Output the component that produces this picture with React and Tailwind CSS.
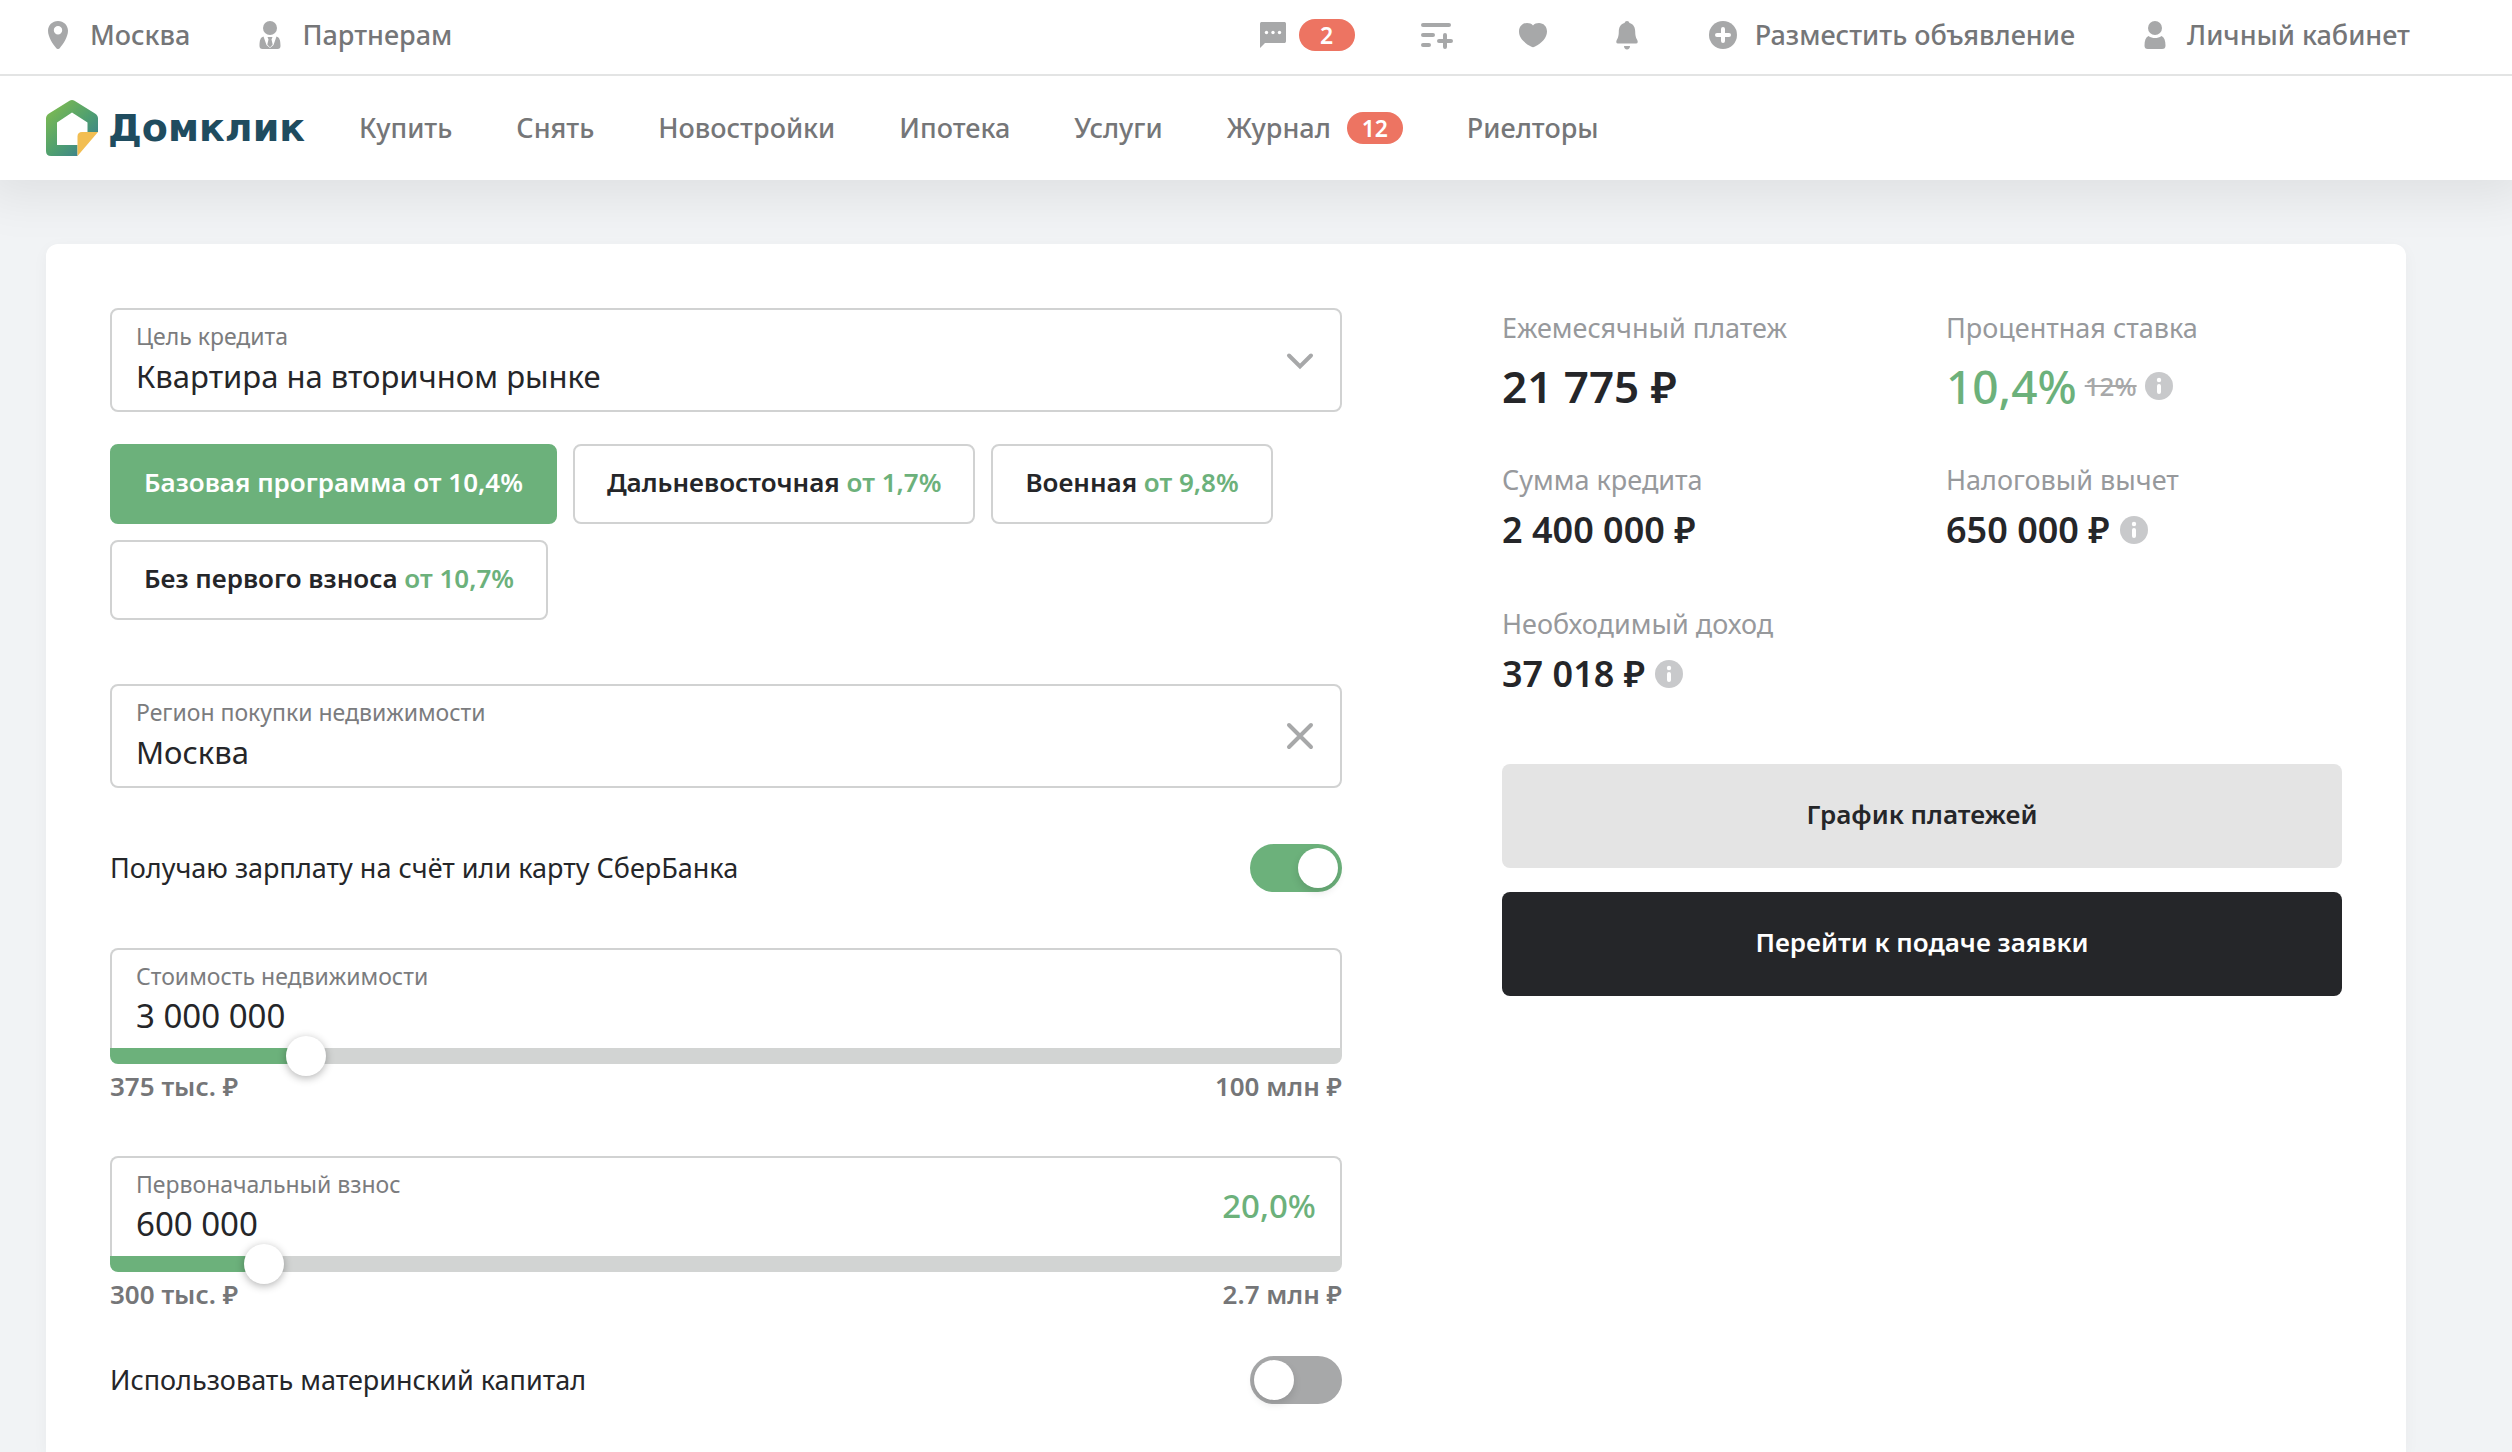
import { useState } from "react";

const programs = [
  { name: "Базовая программа", rate: "от 10,4%" },
  { name: "Дальневосточная", rate: "от 1,7%" },
  { name: "Военная", rate: "от 9,8%" },
  { name: "Без первого взноса", rate: "от 10,7%" },
];

function PinIcon() {
  return (
    <svg className="w-7 h-7" viewBox="0 0 28 28" fill="currentColor">
      <path
        fillRule="evenodd"
        d="M14 0C8.3 0 4 4.300 4 9.800 4 16 9 23.500 12.300 27.200c1 1.100 2.400 1.100 3.400 0C19 23.500 24 16 24 9.800 24 4.300 19.700 0 14 0Zm0 5a4.200 4.200 0 1 1 0 8.400A4.200 4.200 0 0 1 14 5Z"
      />
    </svg>
  );
}

function PartnerIcon() {
  return (
    <svg className="w-7 h-7" viewBox="0 0 28 28" fill="currentColor">
      <circle cx="14" cy="7" r="7" />
      <path d="M7.500 15.500C4.500 16.500 3.500 19 3.500 25c0 2 1 3 3 3h15c2 0 3-1 3-3 0-6-1-8.500-4-9.500L17.500 24 14 27l-3.500-3Z" />
      <path d="M11.500 16h5l-1 2.500 1.200 5L14 26.500l-2.700-3 1.200-5Z" />
    </svg>
  );
}

function PersonIcon() {
  return (
    <svg className="w-7 h-7" viewBox="0 0 28 28" fill="currentColor">
      <circle cx="14" cy="7" r="7" />
      <path d="M7.500 15c4 2.700 9 2.700 13 0 2.700 1.300 4 4.500 4 9.500 0 2.500-1 3.500-3.500 3.500H7c-2.500 0-3.500-1-3.500-3.500 0-5 1.300-8.200 4-9.500Z" />
    </svg>
  );
}

function ChatIcon() {
  return (
    <svg className="w-7 h-7" viewBox="0 0 28 28">
      <path d="M3 1h22c1.400 0 2 .6 2 2v17c0 1.400-.6 2-2 2H6l-5 5V3c0-1.400.6-2 2-2Z" fill="currentColor" />
      <g fill="white">
        <circle cx="7.500" cy="11.500" r="1.700" />
        <circle cx="14" cy="11.500" r="1.700" />
        <circle cx="20.500" cy="11.500" r="1.700" />
      </g>
    </svg>
  );
}

function CompareIcon() {
  return (
    <svg
      className="w-8 h-7"
      viewBox="0 0 32 28"
      fill="none"
      stroke="currentColor"
      strokeWidth="4"
      strokeLinecap="round"
    >
      <path d="M2 4h26M2 14h10M2 24h6M18 20h12M24 14v12" />
    </svg>
  );
}

function HeartIcon() {
  return (
    <svg className="w-7 h-7" viewBox="0 0 28 28" fill="currentColor">
      <path d="M14 4.500C12.500 2.700 10.500 2 8 2 3.500 2 0 5.500 0 10.500 0 17 5.500 22 12 25.600c1.400.8 2.600.8 4 0C22.500 22 28 17 28 10.500 28 5.500 24.500 2 20 2c-2.500 0-4.500.7-6 2.500Z" />
    </svg>
  );
}

function BellIcon() {
  return (
    <svg className="w-7 h-7 overflow-visible" viewBox="0 0 28 28" fill="currentColor">
      <path d="M14 0c-1.500 0-2 .8-2.500 2C7.500 3 5.800 6.500 5.800 10.500c0 3.500-.5 6-1.800 8-1.200 1.900-1 4 1 4h18c2 0 2.200-2.100 1-4-1.300-2-1.800-4.500-1.800-8 0-4-1.700-7.500-5.700-8.500-.5-1.200-1-2-2.500-2ZM11 25h6c0 2-1.300 3.500-3 3.500S11 27 11 25Z" />
    </svg>
  );
}

function PlusIcon() {
  return (
    <svg className="w-7 h-7" viewBox="0 0 28 28">
      <circle cx="14" cy="14" r="14" fill="currentColor" />
      <path d="M14 8v12M8 14h12" stroke="white" strokeWidth="4" strokeLinecap="round" />
    </svg>
  );
}

function Logo() {
  return (
    <a href="#" className="flex items-center text-[#1f4c5f]">
      <svg className="w-[52px] h-14" viewBox="0 0 52 56">
        <defs>
          <linearGradient id="house" x1="0" y1="10" x2="44" y2="54" gradientUnits="userSpaceOnUse">
            <stop offset="0" stopColor="#7dba51" />
            <stop offset="0.55" stopColor="#4f9f70" />
            <stop offset="0.8" stopColor="#438c82" />
            <stop offset="1" stopColor="#3470a5" />
          </linearGradient>
        </defs>
        <path
          fill="url(#house)"
          fillRule="evenodd"
          d="M23.500.8c1.500-1 3.500-1 5 0L49 13.500c2 1.200 3 3 3 5V32H41.500V22.500L26 12.500 11 22.500V45h20.500v11H5c-3.300 0-5-1.700-5-5V18.500c0-2 1-3.800 3-5Z"
        />
        <path fill="#f2be52" d="M52 32H36c-3 0-4.500 1.500-4.500 4.500V56Z" />
      </svg>
      <span className="ml-2.5 font-['DejaVu_Sans',sans-serif] font-bold text-[38px] leading-10">Домклик</span>
    </a>
  );
}

function Badge({ children }) {
  return (
    <span className="h-8 min-w-14 rounded-full bg-[#ed7462] text-white text-[23px] leading-8 font-semibold text-center">
      {children}
    </span>
  );
}

function InfoButton() {
  return (
    <button type="button" aria-label="Подробнее" className="text-[#c8c9cb]">
      <svg className="w-7 h-7" viewBox="0 0 28 28">
        <circle cx="14" cy="14" r="14" fill="currentColor" />
        <circle cx="14" cy="8" r="2.200" fill="white" />
        <rect x="12" y="12" width="4" height="10" rx="2" fill="white" />
      </svg>
    </button>
  );
}

function TopLink({ icon, children }) {
  return (
    <a href="#" className="flex items-center gap-[18px]">
      <span className="text-[#a7a8a9]">{icon}</span>
      {children}
    </a>
  );
}

function Header() {
  return (
    <header className="bg-white shadow-[0_0_48px_16px_rgba(0,0,0,0.08)] text-[27px] font-medium text-[#757678]">
      <div className="h-[76px] pb-1 border-b-2 border-[#e3e4e4] pl-11 pr-[102px] flex items-center justify-between">
        <div className="flex items-center gap-[66px]">
          <TopLink icon={<PinIcon />}>Москва</TopLink>
          <TopLink icon={<PartnerIcon />}>Партнерам</TopLink>
        </div>
        <div className="flex items-center gap-[66px]">
          <a href="#" aria-label="Сообщения" className="flex items-center gap-3 text-[#a7a8a9]">
            <ChatIcon />
            <Badge>2</Badge>
          </a>
          <a href="#" aria-label="Сравнение" className="text-[#a7a8a9]"><CompareIcon /></a>
          <a href="#" aria-label="Избранное" className="text-[#a7a8a9]"><HeartIcon /></a>
          <a href="#" aria-label="Уведомления" className="mr-0.5 text-[#a7a8a9]"><BellIcon /></a>
          <TopLink icon={<PlusIcon />}>Разместить объявление</TopLink>
          <TopLink icon={<PersonIcon />}>Личный кабинет</TopLink>
        </div>
      </div>
      <div className="h-[104px] pl-[46px] flex items-center">
        <Logo />
        <nav className="ml-[54px] flex items-center gap-16">
          <a href="#">Купить</a>
          <a href="#">Снять</a>
          <a href="#">Новостройки</a>
          <a href="#">Ипотека</a>
          <a href="#">Услуги</a>
          <a href="#" className="flex items-center gap-4">
            Журнал <Badge>12</Badge>
          </a>
          <a href="#">Риелторы</a>
        </nav>
      </div>
    </header>
  );
}

function Toggle({ id, label, checked, onChange }) {
  return (
    <div className="flex items-center justify-between h-12">
      <label htmlFor={id} className="text-[27px] leading-8">{label}</label>
      <input
        id={id}
        type="checkbox"
        role="switch"
        checked={checked}
        onChange={(e) => onChange(e.target.checked)}
        className="appearance-none w-[92px] h-12 p-1 rounded-full bg-[#a7a8a9] checked:bg-[#6cb17b] flex checked:justify-end before:w-10 before:h-10 before:rounded-full before:bg-white before:shadow-[0_4px_8px_rgba(0,0,0,0.12)]"
      />
    </div>
  );
}

function SliderField({ id, label, value, percent, position, min, max }) {
  const [pos, setPos] = useState(position);

  return (
    <div>
      <div className="h-[100px] border-2 border-b-0 border-[#d1d2d2] rounded-t-lg px-6 pt-3 flex items-start justify-between">
        <div className="flex-1">
          <label htmlFor={id} className="block text-[23px] leading-7 text-[#7b7c7e]">{label}</label>
          <input id={id} defaultValue={value} className="mt-1.5 block w-full h-10 text-[33px] outline-none" />
        </div>
        {percent && (
          <span className="mt-4 text-[33px] leading-10 font-medium text-[#6cb17b]">{percent}</span>
        )}
      </div>
      <input
        type="range"
        aria-label={label}
        min="0"
        max="1000"
        value={pos}
        onChange={(e) => setPos(Number(e.target.value))}
        style={{
          backgroundImage: `linear-gradient(to right, #6cb17b ${pos / 10 + 1}%, #d2d4d3 ${pos / 10 + 1}%)`,
        }}
        className="block appearance-none w-full h-4 rounded-b-lg [&::-webkit-slider-thumb]:appearance-none [&::-webkit-slider-thumb]:w-10 [&::-webkit-slider-thumb]:h-10 [&::-webkit-slider-thumb]:rounded-full [&::-webkit-slider-thumb]:bg-white [&::-webkit-slider-thumb]:shadow-[0_2px_8px_rgba(0,0,0,0.3)]"
      />
      <div className="pt-1.5 pb-0.5 flex justify-between text-[26px] leading-8 font-semibold text-[#757678]">
        <span>{min}</span>
        <span>{max}</span>
      </div>
    </div>
  );
}

function Stat({ label, children }) {
  return (
    <div>
      <dt className="text-[27px] leading-8 text-[#97999c]">{label}</dt>
      <dd className="mt-3 h-11 flex items-center gap-2.5 text-[36px] font-semibold">{children}</dd>
    </div>
  );
}

function BigStat({ label, children }) {
  return (
    <div>
      <dt className="text-[27px] leading-8 text-[#97999c]">{label}</dt>
      <dd className="mt-5 h-11 flex items-center gap-2 text-[46px] leading-11 font-medium">{children}</dd>
    </div>
  );
}

export default function App() {
  const [program, setProgram] = useState(0);
  const [salary, setSalary] = useState(true);
  const [capital, setCapital] = useState(false);
  const [region, setRegion] = useState("Москва");

  return (
    <div className="min-h-screen flex flex-col bg-[#f1f3f5] text-[#252629] font-['Noto_Sans',sans-serif]">
      <Header />

      <main className="flex-1 mt-16 ml-[46px] mr-[106px] px-16 pt-16 pb-12 bg-white rounded-t-xl shadow-[0_4px_16px_rgba(0,0,0,0.04)] flex items-start justify-between gap-40">
        <form className="flex-1">
          <div className="relative border-2 border-[#d1d2d2] rounded-lg px-6 pt-3 pb-3.5">
            <label htmlFor="goal" className="block text-[23px] leading-7 text-[#7b7c7e]">Цель кредита</label>
            <select id="goal" className="mt-1.5 block appearance-none w-full h-10 text-[31px] leading-10 outline-none">
              <option>Квартира на вторичном рынке</option>
            </select>
            <svg
              className="absolute right-6 top-9 w-8 h-8 pointer-events-none text-[#a7a8a9]"
              viewBox="0 0 32 32"
              fill="none"
              stroke="currentColor"
              strokeWidth="4"
              strokeLinecap="round"
            >
              <path d="m5 9.500 11 11 11-11" />
            </svg>
          </div>

          <div className="mt-8 flex flex-wrap gap-4">
            {programs.map((item, i) => (
              <button
                key={item.name}
                type="button"
                onClick={() => setProgram(i)}
                className={
                  i === program
                    ? "h-20 px-8 pb-1 rounded-lg border-2 border-[#6cb17b] bg-[#6cb17b] text-white text-[26px] font-semibold"
                    : "h-20 px-8 pb-1 rounded-lg border-2 border-[#d1d2d2] text-[26px] font-semibold"
                }
              >
                {item.name} <span className={i === program ? "" : "text-[#6cb17b]"}>{item.rate}</span>
              </button>
            ))}
          </div>

          <div className="relative mt-16 border-2 border-[#d1d2d2] rounded-lg px-6 pt-3 pb-3.5">
            <label htmlFor="region" className="block text-[23px] leading-7 text-[#7b7c7e]">
              Регион покупки недвижимости
            </label>
            <input
              id="region"
              value={region}
              onChange={(e) => setRegion(e.target.value)}
              className="mt-1.5 block w-full h-10 text-[31px] outline-none"
            />
            <button
              type="button"
              aria-label="Очистить"
              onClick={() => setRegion("")}
              className="absolute right-6 top-[34px] text-[#a7a8a9]"
            >
              <svg
                className="w-8 h-8"
                viewBox="0 0 32 32"
                fill="none"
                stroke="currentColor"
                strokeWidth="4"
                strokeLinecap="round"
              >
                <path d="m5 5 22 22M27 5 5 27" />
              </svg>
            </button>
          </div>

          <div className="my-14">
            <Toggle
              id="salary"
              label="Получаю зарплату на счёт или карту СберБанка"
              checked={salary}
              onChange={setSalary}
            />
          </div>

          <SliderField
            id="price"
            label="Стоимость недвижимости"
            value="3 000 000"
            position={148}
            min="375 тыс. ₽"
            max="100 млн ₽"
          />

          <div className="mt-[52px] mb-11">
            <SliderField
              id="deposit"
              label="Первоначальный взнос"
              value="600 000"
              percent="20,0%"
              position={112}
              min="300 тыс. ₽"
              max="2.7 млн ₽"
            />
          </div>

          <Toggle id="capital" label="Использовать материнский капитал" checked={capital} onChange={setCapital} />
        </form>

        <section className="w-[840px] pt-1">
          <dl className="grid grid-cols-2 gap-x-12 gap-y-14">
            <BigStat label="Ежемесячный платеж">
              <span className="text-[44px] font-semibold">21 775 ₽</span>
            </BigStat>
            <BigStat label="Процентная ставка">
              <span className="text-[#6cb17b]">10,4%</span>
              <s className="text-[26px] text-[#a7a8a9]">12%</s>
              <InfoButton />
            </BigStat>
            <Stat label="Сумма кредита">2 400 000 ₽</Stat>
            <Stat label="Налоговый вычет">650 000 ₽ <InfoButton /></Stat>
            <Stat label="Необходимый доход">37 018 ₽ <InfoButton /></Stat>
          </dl>

          <div className="mt-[68px] flex flex-col gap-6">
            <button type="button" className="h-[104px] pb-1 rounded-lg bg-[#e4e4e4] text-[26px] font-semibold">
              График платежей
            </button>
            <button type="button" className="h-[104px] pb-1 rounded-lg bg-[#252629] text-white text-[26px] font-semibold">
              Перейти к подаче заявки
            </button>
          </div>
        </section>
      </main>
    </div>
  );
}
